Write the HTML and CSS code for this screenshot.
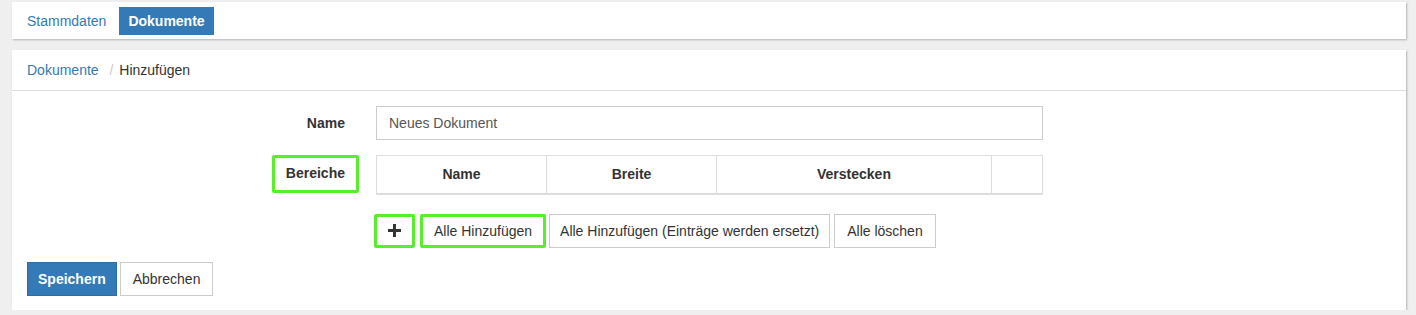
FILE: index.html
```html
<!DOCTYPE html>
<html lang="de">
<head>
  <meta charset="UTF-8">
  <title>Dokumente - Hinzufügen</title>
  <link rel="stylesheet" href="styles.css">
</head>
<body>
  <div class="page">
    <!-- Tabs -->
    <div class="card nav-card">
      <a class="pill" href="#">Stammdaten</a>
      <a class="pill active" href="#">Dokumente</a>
    </div>

    <!-- Form card -->
    <div class="card">
      <div class="card-header">
        <a href="#">Dokumente</a>
        <span class="divider">/</span>
        <span class="current">Hinzufügen</span>
      </div>

      <div class="card-body">
        <div class="form-row">
          <label class="form-label">Name</label>
          <div class="form-field">
            <input class="input" type="text" value="Neues Dokument">
          </div>
        </div>

        <div class="form-row table-row">
          <div class="form-label">
            <span class="label-box highlight">Bereiche</span>
          </div>
          <div class="form-field">
            <table class="table">
              <thead>
                <tr>
                  <th class="col-name">Name</th>
                  <th class="col-width">Breite</th>
                  <th class="col-hide">Verstecken</th>
                  <th></th>
                </tr>
              </thead>
            </table>
          </div>
        </div>

        <div class="form-row button-row">
          <div class="form-label"></div>
          <div class="form-field buttons">
            <button class="btn btn-icon highlight" type="button">
              <svg width="13" height="13" viewBox="0 0 13 13"><path d="M5 0h3v5h5v3H8v5H5V8H0V5h5z" fill="#333"/></svg>
            </button>
            <button class="btn highlight" type="button">Alle Hinzufügen</button>
            <button class="btn btn-wide" type="button">Alle Hinzufügen (Einträge werden ersetzt)</button>
            <button class="btn btn-last" type="button">Alle löschen</button>
          </div>
        </div>

        <div class="actions">
          <button class="btn btn-primary" type="button">Speichern</button>
          <button class="btn" type="button">Abbrechen</button>
        </div>
      </div>
    </div>
  </div>
</body>
</html>
```

FILE: styles.css
```css
* {
  box-sizing: border-box;
  margin: 0;
  padding: 0;
}

body {
  font-family: 'Liberation Sans', Arial, sans-serif;
  font-size: 14px;
  line-height: 20px;
  color: #333;
  background-color: #efefef;
}

a {
  color: #337ab7;
  text-decoration: none;
}

.page {
  padding: 2px 10px 0 12px;
}

.card {
  background: #fff;
  box-shadow: 1px 1px 2px rgba(0, 0, 0, 0.25);
}

/* Tabs */
.nav-card {
  display: flex;
  gap: 3px;
  padding: 5px 5px 4px;
  margin-bottom: 11px;
}

.pill {
  display: block;
  padding: 4px 10px;
  font-size: 14px;
}

.pill.active {
  background: #337ab7;
  color: #fff;
  font-weight: bold;
  padding: 4px 9px;
}

/* Breadcrumb */
.card-header {
  padding: 10px 15px;
  border-bottom: 1px solid #ddd;
}

.divider {
  color: #ccc;
  padding: 0 2px 0 7px;
}

.card-body {
  padding: 15px 15px 14px;
}

/* Form */
.form-row {
  display: flex;
  align-items: center;
  margin-bottom: 15px;
}

.form-label {
  width: 318px;
  margin-right: 31px;
  text-align: right;
  font-weight: bold;
  display: flex;
  justify-content: flex-end;
}

.form-field {
  width: 667px;
}

.input {
  display: block;
  width: 100%;
  height: 34px;
  padding: 6px 12px;
  font: inherit;
  color: #555;
  border: 1px solid #ccc;
}

.label-box {
  display: inline-block;
  padding: 5px 11px 7px;
  margin-right: -14px;
  margin-top: -2px;
}

.highlight {
  border: 3px solid #55f02a !important;
  border-radius: 2px;
}

.table-row {
  margin-bottom: 20px;
}

.table {
  width: 100%;
  border-collapse: collapse;
}

.table th {
  border: 1px solid #ddd;
  border-bottom-width: 2px;
  padding: 8px;
  height: 38px;
  text-align: center;
}

.col-name,
.col-width {
  width: 170px;
}

.col-hide {
  width: 275px;
}

.button-row {
  margin-bottom: 14px;
  margin-top: -1px;
}

.buttons {
  width: auto;
  display: flex;
  gap: 3px;
  margin-left: -2px;
}

/* Buttons */
.btn {
  display: inline-block;
  height: 34px;
  padding: 6px 12px;
  font: inherit;
  color: #333;
  background: #fff;
  border: 1px solid #ccc;
  cursor: pointer;
}

.btn.highlight {
  padding: 4px 11px;
}

.btn-icon {
  width: 41px;
  margin-right: 2px;
  display: flex;
  align-items: center;
  justify-content: center;
}

.btn-wide {
  padding: 6px 10px;
}

.btn-last {
  margin-left: 1px;
}

.btn-primary {
  background: #337ab7;
  border-color: #2e6da4;
  color: #fff;
  font-weight: bold;
  padding: 6px 10px;
}

.actions {
  display: flex;
  gap: 3px;
}
```
